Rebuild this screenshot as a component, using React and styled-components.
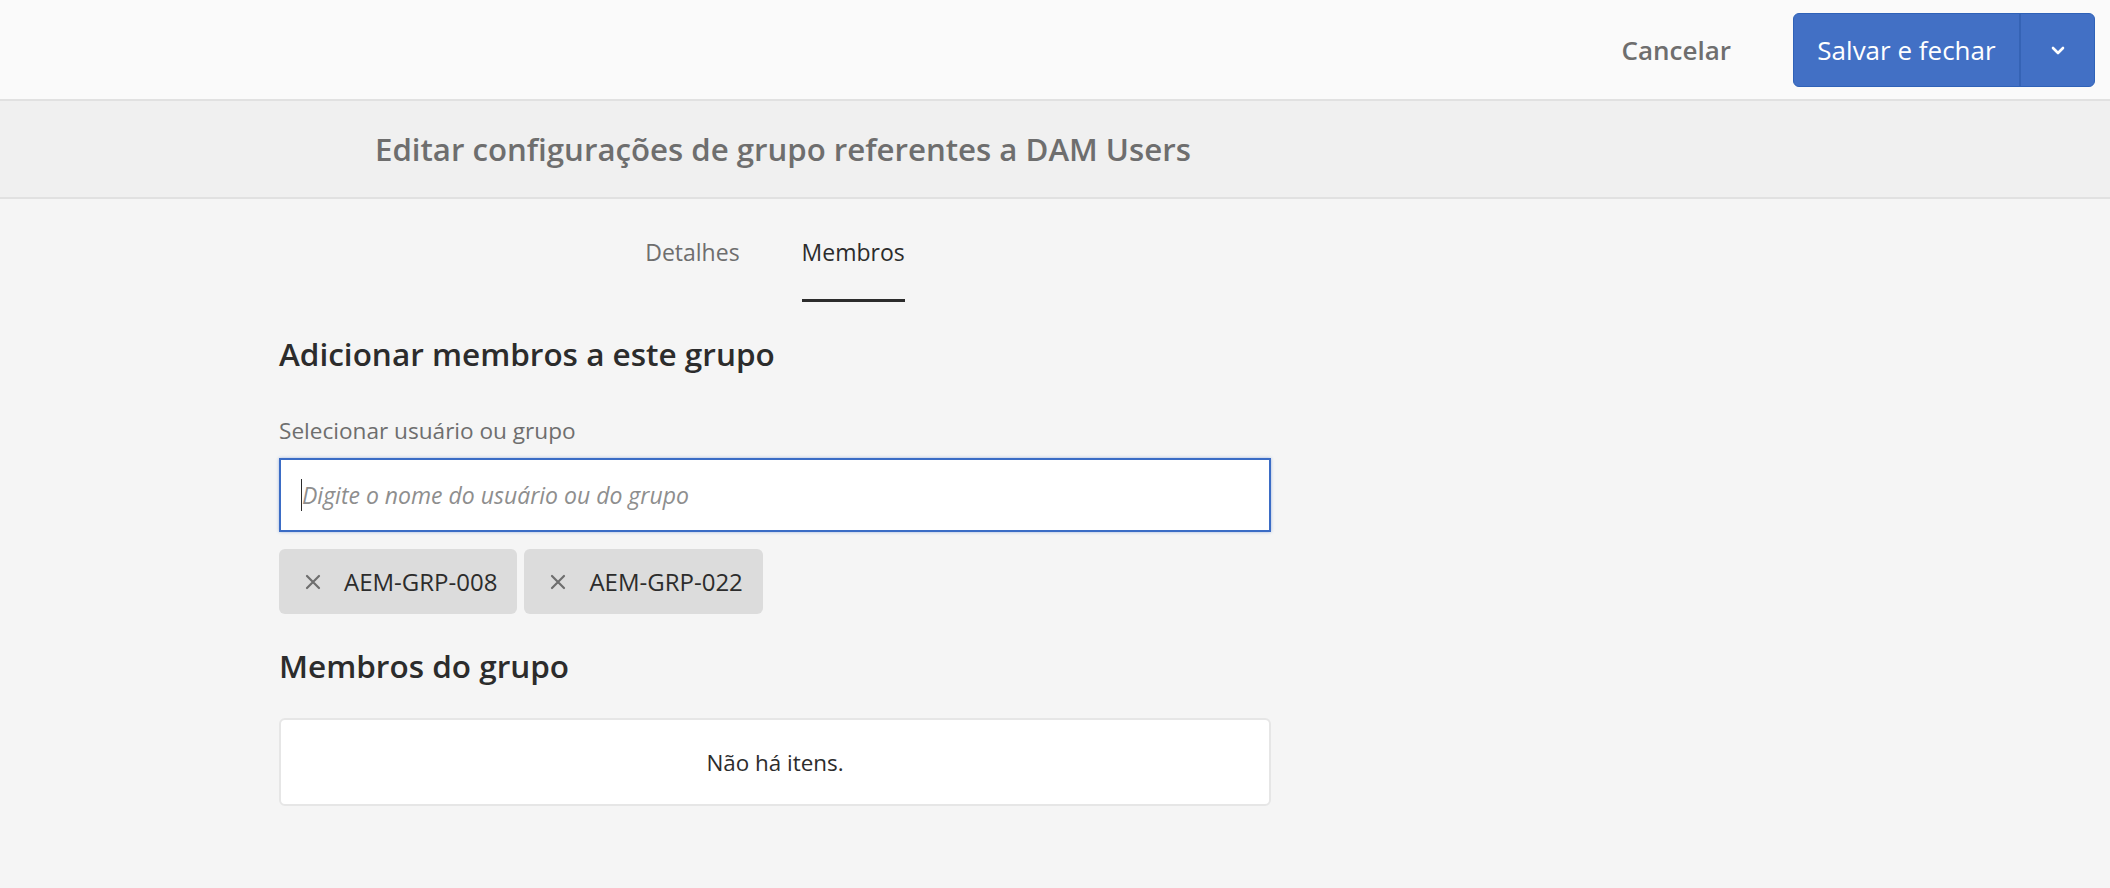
import React from "react";
import styled, { createGlobalStyle } from "styled-components";

const GlobalStyle = createGlobalStyle`
  html, body {
    margin: 0;
    padding: 0;
    background: #f5f5f5;
    font-family: "Open Sans", "Noto Sans", sans-serif;
  }
`;

const members = ["AEM-GRP-008", "AEM-GRP-022"];

function App() {
  return (
    <>
      <GlobalStyle />
      <STPage>
        <STHeader>
          <STCancel>Cancelar</STCancel>
          <STSplitButton>
            <STMainAction>Salvar e fechar</STMainAction>
            <STMenuAction aria-label="Mais opções">
              <svg width="22" height="22" viewBox="0 0 22 22">
                <path d="M6 9l5 5 5-5" fill="none" stroke="#fff" strokeWidth="2.6" strokeLinecap="round" strokeLinejoin="round" />
              </svg>
            </STMenuAction>
          </STSplitButton>
        </STHeader>

        <STTitleBar>
          <STTitle>Editar configurações de grupo referentes a DAM Users</STTitle>
        </STTitleBar>

        <STContent>
          <STTabs>
            <STTab>Detalhes</STTab>
            <STTab active>Membros</STTab>
          </STTabs>

          <STHeading>Adicionar membros a este grupo</STHeading>
          <STLabel>Selecionar usuário ou grupo</STLabel>
          <STInputBox>
            <STCaret />
            <STPlaceholder>Digite o nome do usuário ou do grupo</STPlaceholder>
          </STInputBox>

          <STTagList>
            {members.map((m) => (
              <STTag key={m}>
                <svg width="16" height="16" viewBox="0 0 16 16">
                  <path d="M2 2l12 12M14 2L2 14" stroke="#6e6e6e" strokeWidth="2.2" strokeLinecap="round" />
                </svg>
                <span>{m}</span>
              </STTag>
            ))}
          </STTagList>

          <STHeading>Membros do grupo</STHeading>
          <STEmptyBox>Não há itens.</STEmptyBox>
        </STContent>
      </STPage>
    </>
  );
}

export default App;

const STPage = styled.div`
  min-height: 888px;
  background: #f5f5f5;
`;

const STHeader = styled.header`
  height: 99px;
  background: #fafafa;
  border-bottom: 2px solid #e1e1e1;
  display: flex;
  justify-content: flex-end;
  align-items: center;
  padding-right: 15px;
  gap: 62px;
`;

const STCancel = styled.button`
  background: none;
  border: none;
  padding: 0;
  font-family: inherit;
  font-size: 26px;
  font-weight: 600;
  color: #6e6e6e;
  cursor: pointer;
`;

const STSplitButton = styled.div`
  display: flex;
  height: 72px;
  border-radius: 6px;
  border: 1px solid #2f62b8;
  background: #4270c5;
  overflow: hidden;
`;

const STMainAction = styled.button`
  width: 227px;
  background: none;
  border: none;
  border-right: 2px solid #3563b5;
  color: #fff;
  font-family: inherit;
  font-size: 26px;
  font-weight: 400;
  padding: 0;
`;

const STMenuAction = styled.button`
  width: 73px;
  background: none;
  border: none;
  display: flex;
  align-items: center;
  justify-content: center;
  padding: 0;
`;

const STTitleBar = styled.div`
  height: 96px;
  background: #f0f0f0;
  border-bottom: 2px solid #e1e1e1;
  display: flex;
  align-items: center;
  padding-left: 375px;
`;

const STTitle = styled.h1`
  margin: 0;
  font-size: 31.2px;
  font-weight: 600;
  color: #6e6e6e;
`;

const STContent = styled.main`
  width: 992px;
  margin-left: 279px;
  display: flex;
  flex-direction: column;
`;

const STTabs = styled.nav`
  display: flex;
  justify-content: center;
  gap: 62px;
`;

const STTab = styled.div`
  padding-top: 38px;
  padding-bottom: 32px;
  line-height: 30px;
  font-size: 23px;
  color: ${(p) => (p.active ? "#2c2c2c" : "#6e6e6e")};
  border-bottom: 3px solid ${(p) => (p.active ? "#2c2c2c" : "transparent")};
`;

const STHeading = styled.h2`
  margin: 32px 0 0;
  line-height: 40px;
  font-size: 31.5px;
  font-weight: 600;
  color: #2c2c2c;
`;

const STLabel = styled.label`
  margin-top: 42px;
  line-height: 30px;
  font-size: 22.6px;
  color: #6e6e6e;
`;

const STInputBox = styled.div`
  margin-top: 12px;
  height: 74px;
  box-sizing: border-box;
  background: #fff;
  border: 2px solid #3b6cc5;
  box-shadow: 0 0 3px rgba(59, 108, 197, 0.45);
  display: flex;
  align-items: center;
  padding-left: 20px;
`;

const STCaret = styled.span`
  width: 1px;
  height: 32px;
  background: #2c2c2c;
`;

const STPlaceholder = styled.span`
  font-size: 23px;
  font-style: italic;
  color: #8e8e8e;
`;

const STTagList = styled.div`
  margin-top: 17px;
  display: flex;
  gap: 7px;
`;

const STTag = styled.div`
  height: 65px;
  box-sizing: border-box;
  padding: 0 20px 0 26px;
  display: flex;
  align-items: center;
  gap: 23px;
  background: #dcdcdc;
  border-radius: 6px;
  font-size: 24px;
  color: #2c2c2c;
`;

const STEmptyBox = styled.div`
  margin-top: 32px;
  height: 88px;
  box-sizing: border-box;
  background: #fff;
  border: 2px solid #e6e6e6;
  border-radius: 6px;
  display: flex;
  align-items: center;
  justify-content: center;
  font-size: 22.4px;
  color: #2c2c2c;
`;
